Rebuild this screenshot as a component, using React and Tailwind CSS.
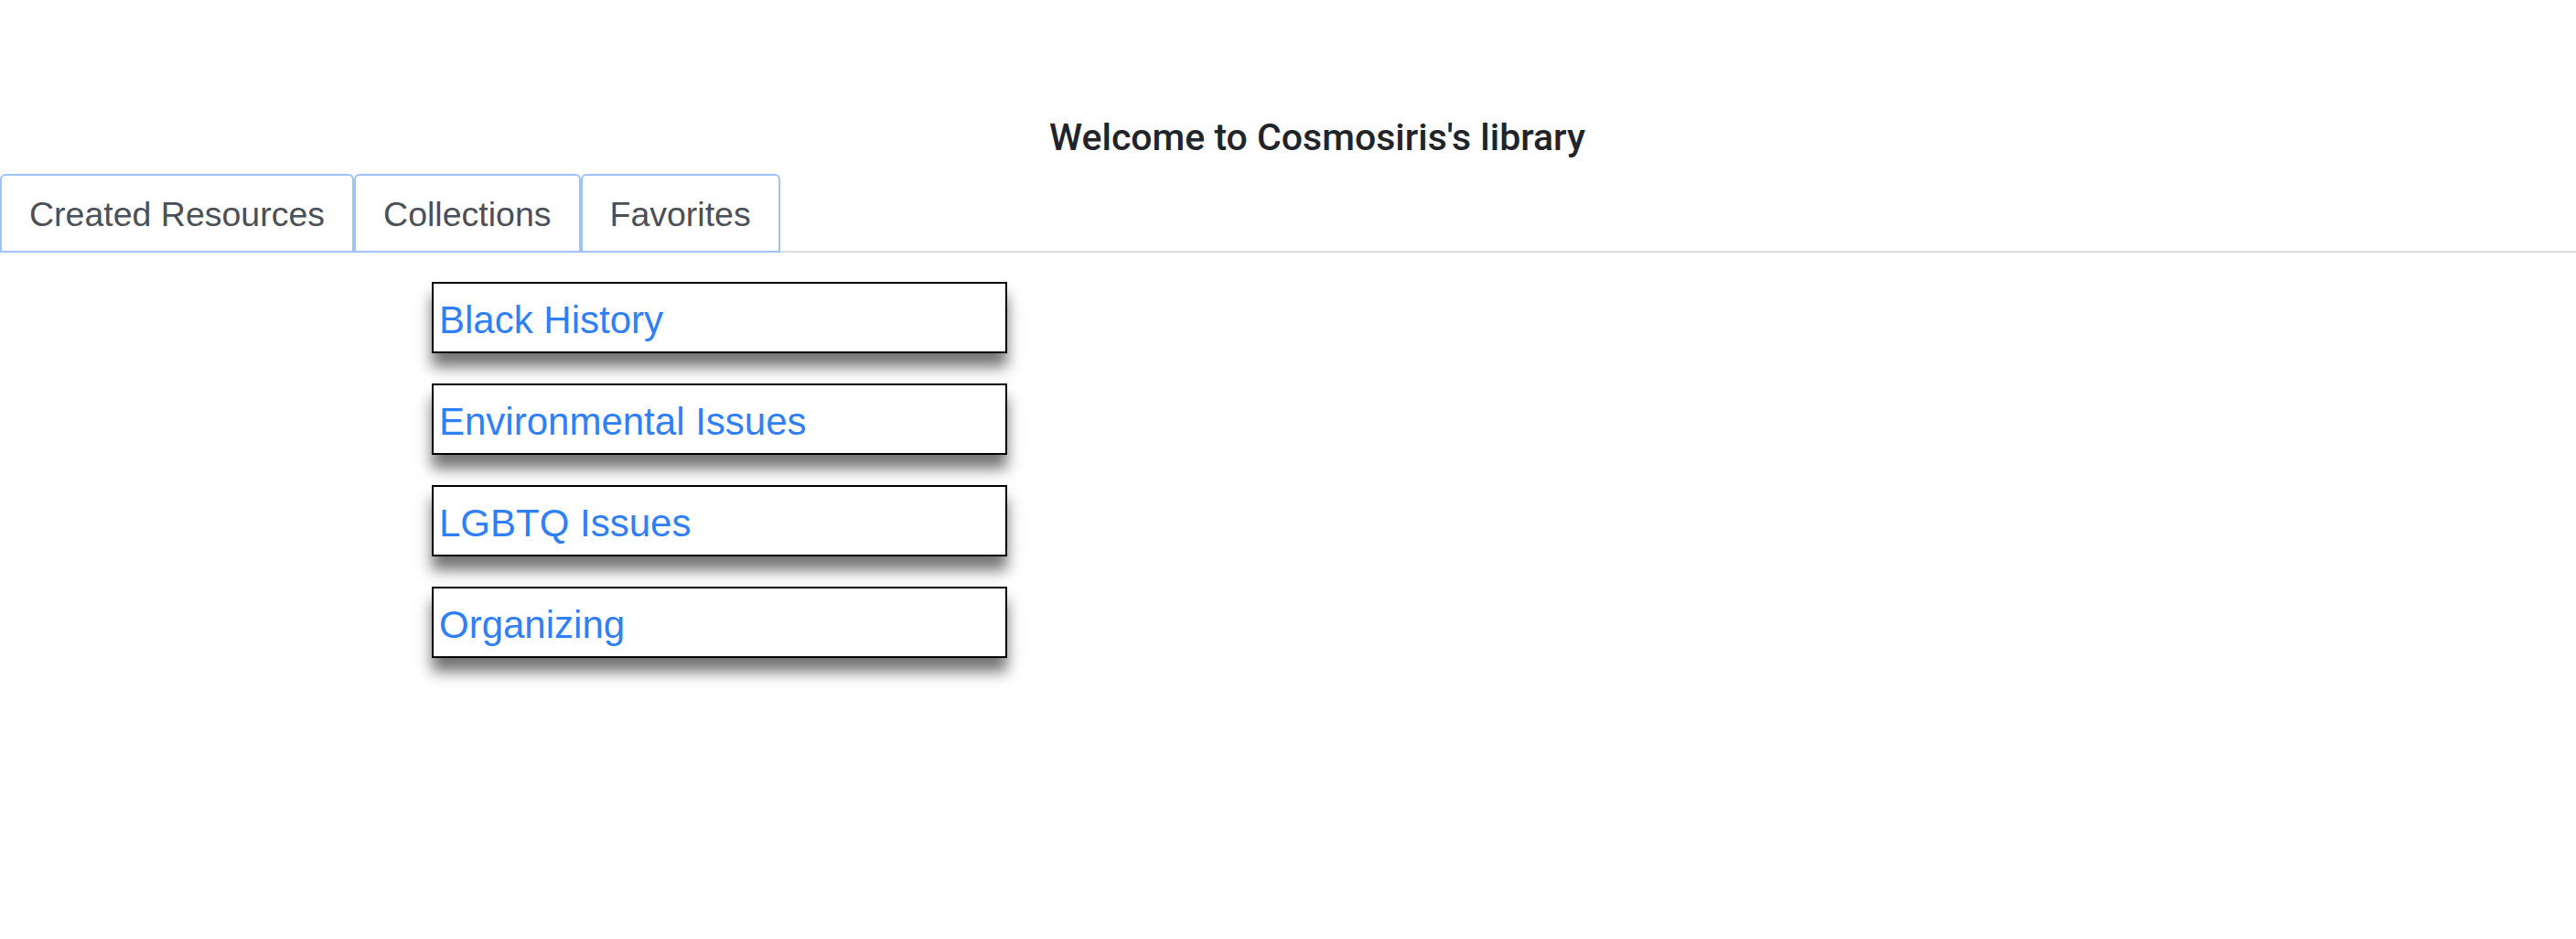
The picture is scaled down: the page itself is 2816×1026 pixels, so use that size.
export default function App() {
  const items = ["Black History", "Environmental Issues", "LGBTQ Issues", "Organizing"];
  const tabs = ["Created Resources", "Collections", "Favorites"];
  return (
    <div className="min-h-[1026px] w-[2816px] bg-white" style={{ fontFamily: '"Liberation Sans", Arial, sans-serif' }}>
      <div className="pt-[126px] pl-[64px] text-center">
        <h1 className="m-0 text-[41px] leading-[48px] font-medium text-[#212529]" style={{ fontFamily: 'Roboto, "Liberation Sans", sans-serif' }}>
          Welcome to Cosmosiris's library
        </h1>
      </div>
      <div className="mt-[16px] flex border-b-2 border-[#dcdcdc]">
        {tabs.map((t) => (
          <div
            key={t}
            className="-mb-[2px] rounded-t-[6px] border-2 border-[#9cc4f8] px-[30px] pt-[21px] pb-[19px] text-[37.5px] leading-[42px] text-[#495057]"
          >
            {t}
          </div>
        ))}
      </div>
      <div className="ml-[472px] mt-[32px] flex w-[629px] flex-col gap-[33px]">
        {items.map((it) => (
          <div
            key={it}
            className="h-[78px] border-2 border-black bg-white pl-[6px] pt-[16px] text-[42px] leading-[48px] text-[#2f7ff7] shadow-[0_15px_15px_rgba(0,0,0,0.55)]"
          >
            {it}
          </div>
        ))}
      </div>
    </div>
  );
}
